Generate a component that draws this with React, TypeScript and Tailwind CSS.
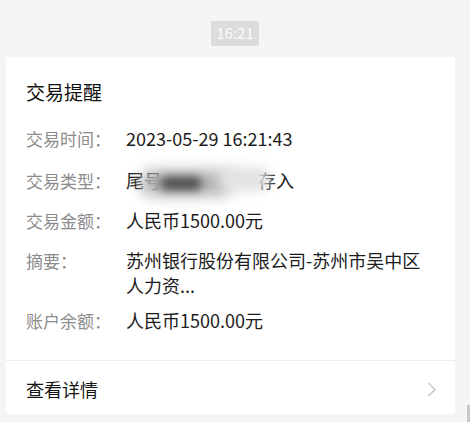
import React from "react";

const font = { fontFamily: '"Noto Sans CJK SC", "Noto Sans", sans-serif' };

function Row({ label, children, className = "" }: { label: string; children: React.ReactNode; className?: string }) {
  return (
    <div className={"flex leading-[25px] " + className}>
      <div className="w-[100px] shrink-0 text-[17px] text-[#8c8c8c]">{label}</div>
      <div className="flex-1 text-[18px] text-[#1c1c1c]">{children}</div>
    </div>
  );
}

export default function App() {
  return (
    <div className="relative w-[470px] h-[422px] bg-[#f5f5f5] overflow-hidden" style={font}>
      <div className="flex justify-center pt-[21px]">
        <div className="w-[48px] h-[25px] flex items-center justify-center bg-[#dcdcdc] text-[#fafafa] text-[15px] rounded-[2px]">16:21</div>
      </div>
      <div className="mt-[11px] ml-[6px] w-[449px] h-[357px] bg-white rounded-[2px] flex flex-col">
        <div className="px-[20px] pt-[21px] h-[303px]">
          <div className="text-[19px] leading-[28px] text-[#111]">交易提醒</div>
          <div className="flex flex-col mt-[20px]">
            <Row label="交易时间：">2023-05-29 16:21:43</Row>
            <Row label="交易类型：" className="mt-[17px]">
              <span className="relative inline-flex items-center">
                <span>尾号</span>
                <span className="inline-block w-[96px]"></span>
                <span>存入</span>
                <span className="absolute left-[14px] top-[2px] w-[92px] h-[26px] rounded-full bg-[#b4b4b4] blur-[7px]"></span>
                <span className="absolute left-[34px] top-[9px] w-[42px] h-[13px] rounded-full bg-[#4a4a4a] blur-[5px]"></span>
                <span className="absolute left-[92px] top-[-1px] w-[52px] h-[24px] rounded-full bg-[#e2e2e2] blur-[6px]"></span>
              </span>
            </Row>
            <Row label="交易金额：" className="mt-[15px]">人民币1500.00元</Row>
            <Row label="摘要：" className="mt-[15px]">
              <div>苏州银行股份有限公司-苏州市吴中区</div>
              <div className="-mt-[0.5px]">人力资...</div>
            </Row>
            <Row label="账户余额：" className="mt-[10px]">人民币1500.00元</Row>
          </div>
        </div>
        <div className="h-px bg-[#ededed]"></div>
        <div className="flex-1 flex items-center justify-between pl-[20px] pr-[18px] pt-[4px]">
          <span className="text-[18px] text-[#151515]">查看详情</span>
          <svg width="10" height="15" viewBox="0 0 10 15">
            <path d="M1.5 1 L8 7.5 L1.5 14" fill="none" stroke="#c4c4c4" strokeWidth="1.4" />
          </svg>
        </div>
      </div>
      <div className="absolute right-0 bottom-0 w-[3px] h-[17px] bg-[#c8c8c8]"></div>
    </div>
  );
}
